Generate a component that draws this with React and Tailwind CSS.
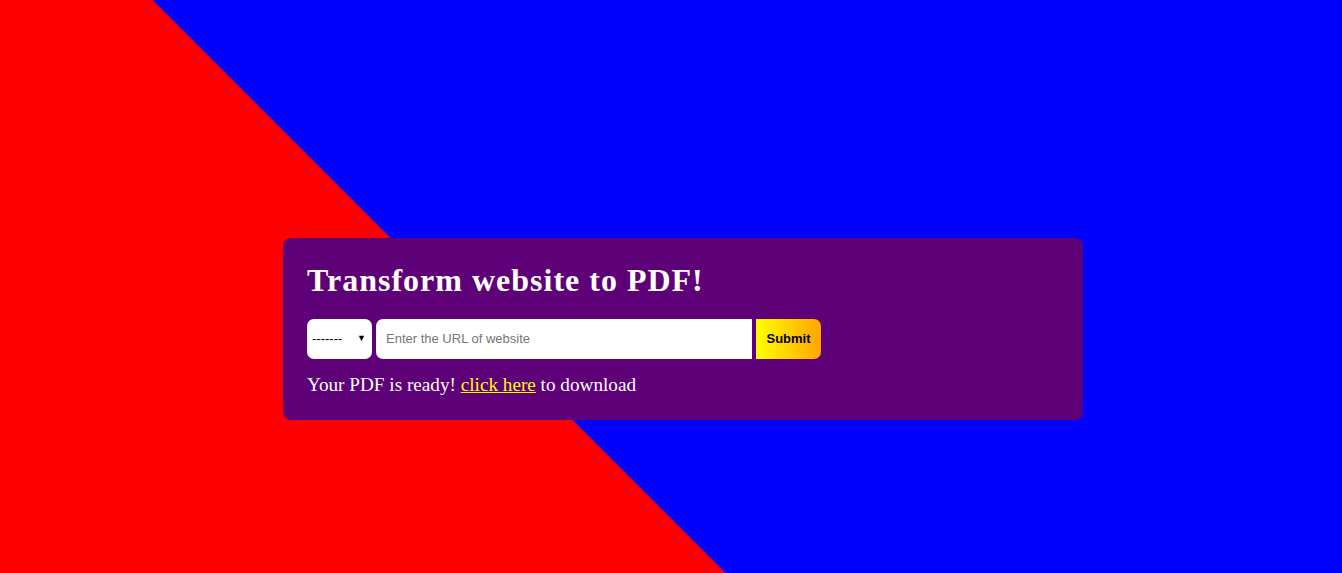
export default function App() {
  return (
    <div className="w-[1342px] h-[573px] overflow-hidden bg-[linear-gradient(45deg,#ff0000_37.86%,#0000ff_37.86%)] pl-[283px] pt-[238px]">
      <div className="w-[800px] h-[182px] rounded-[8px] bg-[#5e0078] px-[24px] pt-[22px]">
        <h1 className="text-white font-bold text-[32px] leading-[40px] tracking-[1px] font-['Liberation_Serif',serif]">
          Transform website to PDF!
        </h1>
        <div className="flex mt-[19px] h-[40px] gap-[4px]">
          <div className="w-[65px] h-[40px] bg-white rounded-[7px] flex items-center justify-between pl-[5px] pr-[6px] font-['Liberation_Sans',sans-serif] text-[13px] text-black">
            <span>-------</span>
            <span className="text-[9px]">▼</span>
          </div>
          <div className="w-[376px] h-[40px] bg-white rounded-l-[7px] flex items-center pl-[10px] font-['Liberation_Sans',sans-serif] text-[13px] text-[#757575]">
            Enter the URL of website
          </div>
          <div className="w-[65px] h-[40px] rounded-r-[7px] bg-[linear-gradient(90deg,#ffff00,#ffa500)] flex items-center justify-center font-['Liberation_Sans',sans-serif] font-bold text-[13px] text-black">
            Submit
          </div>
        </div>
        <p className="mt-[13px] text-white text-[19.2px] leading-[26px] font-['Liberation_Serif',serif]">
          Your PDF is ready! <span className="text-[#ffff00] underline">click here</span> to download
        </p>
      </div>
    </div>
  );
}
